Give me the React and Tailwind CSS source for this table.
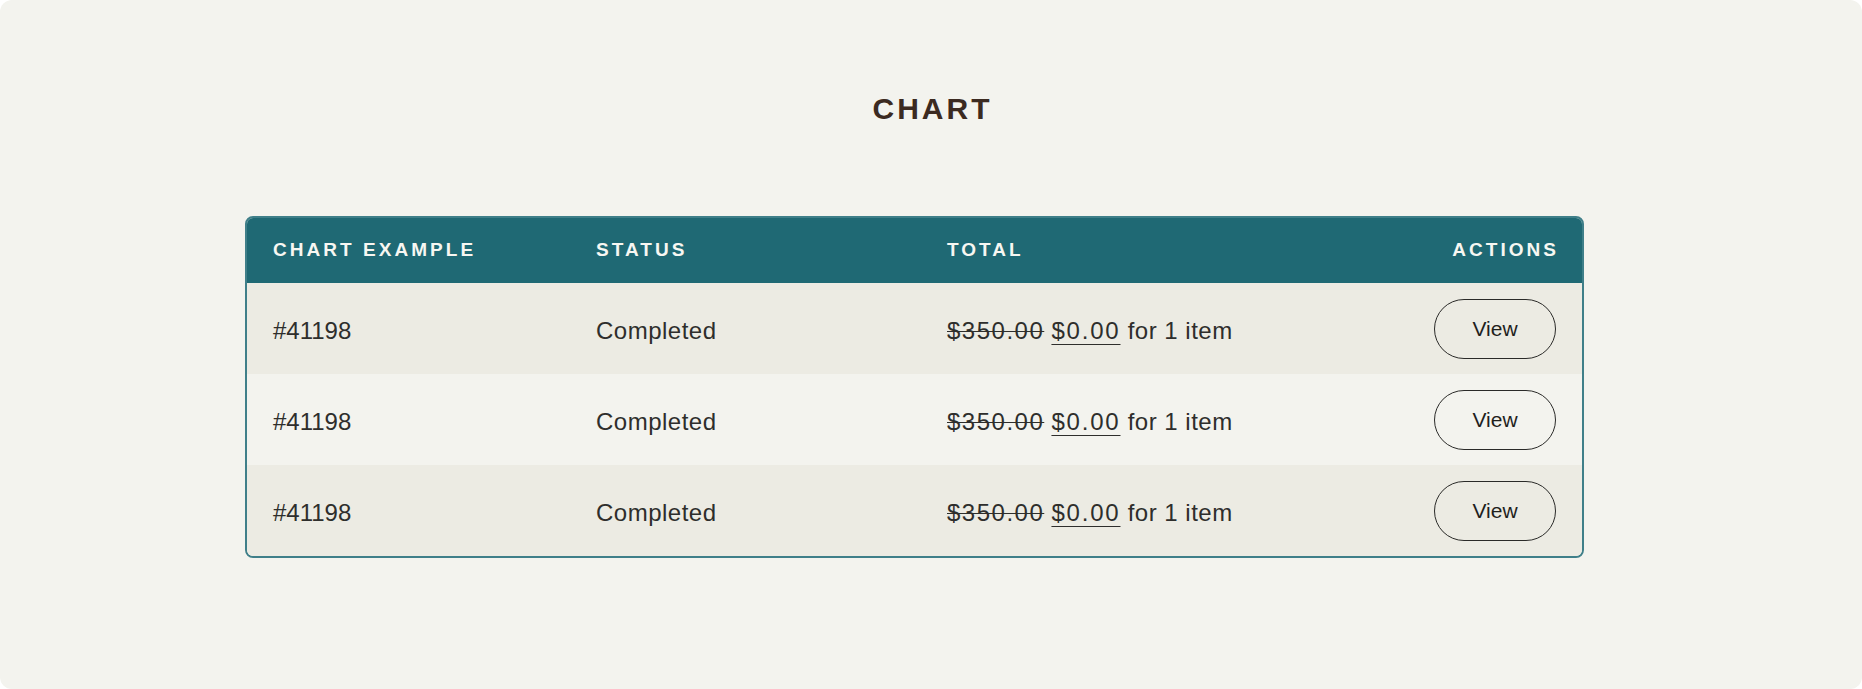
import React from "react";

const orders = [
    { id: "#41198", status: "Completed", was: "$350.00", now: "$0.00", items: "for 1 item" },
    { id: "#41198", status: "Completed", was: "$350.00", now: "$0.00", items: "for 1 item" },
    { id: "#41198", status: "Completed", was: "$350.00", now: "$0.00", items: "for 1 item" },
];

const App = () => {
    return (
        <div className="min-h-screen bg-white font-['Liberation_Sans',Arial,sans-serif]">
            <div className="h-[689px] w-full rounded-[12px] bg-[#f3f3ee] flex flex-col pt-[94px]">
                <h1 className="self-center text-[30px] leading-none font-bold tracking-[0.1em] text-[#3b2a21] pl-[0.1em]">
                    CHART
                </h1>

                <div className="mt-[92px] ml-[245px] w-[1339px] rounded-[8px] border-2 border-[#3f7f89] overflow-hidden">
                    <div className="flex items-center h-[65px] px-[26px] bg-[#1f6974] text-[#f7f7f2] text-[19px] font-bold tracking-[0.16em]">
                        <div className="w-[323px]">CHART EXAMPLE</div>
                        <div className="w-[351px]">STATUS</div>
                        <div className="flex-1">TOTAL</div>
                        <div className="-mr-[0.16em]">ACTIONS</div>
                    </div>

                    {orders.map((order, i) => (
                        <div
                            key={i}
                            className={
                                "flex items-center h-[91px] px-[26px] text-[24px] text-[#2e2e2c] " +
                                (i % 2 === 0 ? "bg-[#ecebe3]" : "bg-[#f3f3ee]")
                            }
                        >
                            <div className="w-[323px] pt-[4px]">{order.id}</div>
                            <div className="w-[351px] pt-[4px] tracking-[0.5px]">{order.status}</div>
                            <div className="flex-1 pt-[4px] tracking-[0.5px]">
                                <span className="line-through decoration-1 tracking-[1.5px]">{order.was}</span>{" "}
                                <span className="underline decoration-1 underline-offset-[5px] tracking-[1.8px]">{order.now}</span>{" "}
                                {order.items}
                            </div>
                            <button
                                type="button"
                                className="w-[122px] h-[60px] rounded-full border-[1.5px] border-[#2a2a28] text-[21px] text-[#1f1f1d] font-medium"
                            >
                                View
                            </button>
                        </div>
                    ))}
                </div>
            </div>
        </div>
    );
};

export default App;
